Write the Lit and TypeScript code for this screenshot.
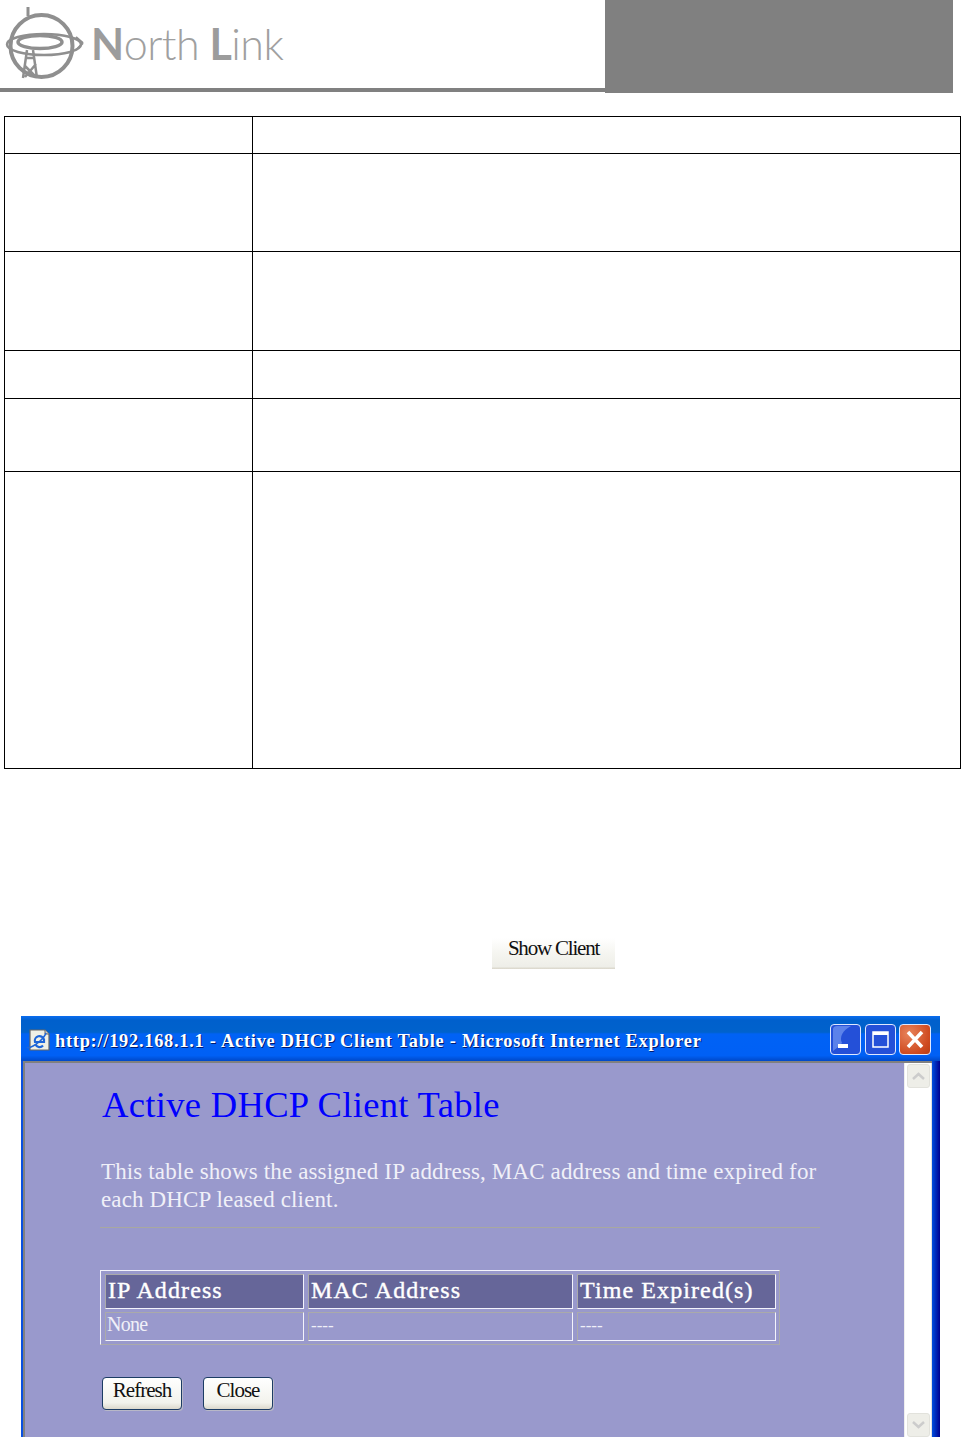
import { LitElement, html, css } from "lit";
import { customElement } from "lit/decorators.js";

@customElement("app-root")
export class AppRoot extends LitElement {
  static styles = css`
    :host { display: block; width: 961px; height: 1437px; overflow: hidden; background: #fff; font-family: "Liberation Serif", serif; position: relative; }
    .header { display: flex; height: 93px; width: 953px; }
    .brand { width: 605px; height: 92px; box-sizing: border-box; border-bottom: 4px solid #808080; display: flex; align-items: flex-start; padding: 7px 0 0 5px; gap: 4px; }
    .brand svg { flex: none; }
    .word { font-family: "Lato", sans-serif; font-weight: 300; font-size: 43px; line-height: 1; color: #a0a0a0; margin-top: 15px; letter-spacing: -0.5px; word-spacing: -1px; }
    .word b { font-weight: 700; color: #9c9c9c; }
    .block { flex: 1; background: #808080; }
    table.doc { border-collapse: collapse; margin: 23px 0 0 4px; width: 957px; table-layout: fixed; }
    table.doc td { border: 1px solid #000; padding: 0; }
    table.doc td:first-child { width: 247px; }
    .showrow { height: 31px; margin: 169px 0 0 492px; width: 123px; box-sizing: border-box; background: linear-gradient(#fff 0%, #f5f5f0 50%, #eeeee8 92%, #d8d4c8 100%); font-size: 21px; letter-spacing: -1.2px; text-align: center; line-height: 21px; color: #111; }
    .win { margin: 47px 0 0 21px; width: 919px; height: 440px; background: linear-gradient(90deg, #0a50e0 0, #0a50e0 99.1%, #0048d8 99.2%, #000090 100%); box-sizing: border-box; display: flex; flex-direction: column; border-radius: 3px 3px 0 0; }
    .title { height: 45px; flex: none; box-sizing: border-box; background: linear-gradient(#0a6cf0 0, #0060cc 10%, #0062cc 36%, #0062f5 40%, #0060f5 88%, #0048c8 100%); display: flex; align-items: center; padding: 2px 9px 0 4px; }
    .ie { flex: none; margin-right: 4px; }
    .ttext { flex: 1; color: #fff; font-weight: 700; font-size: 18.4px; letter-spacing: 0.73px; text-shadow: 1px 1px 0 #001a70; white-space: nowrap; overflow: hidden; margin-top: 4px; }
    .tbtns { display: flex; gap: 3px; }
    .tbtn { width: 31px; height: 31px; box-sizing: border-box; border: 1px solid #dfe8ff; border-radius: 4px; background: #2450d8; overflow: hidden; }
    .tbtn.min { margin-right: 1px; }
    .tbtn svg { display: block; }
    .tbtn.x { width: 32px; background: radial-gradient(circle at 30% 30%, #e8845c, #cf4a20 70%, #b83c14); }
    .frame { flex: 1; display: flex; margin: 0 8px 0 2px; border-top: 2px solid #808080; border-left: 2px solid #808080; min-height: 0; }
    .content { flex: 1; background: #9999cc; padding: 20px 0 0 75px; color: #eeeef8; box-sizing: border-box; min-width: 0; }
    h1 { margin: 0; font-weight: 400; font-size: 36.6px; line-height: 44px; color: #0000ff; letter-spacing: 0.3px; padding-left: 2px; white-space: nowrap; }
    p { margin: 31px 0 0; font-size: 23px; line-height: 28px; width: 730px; letter-spacing: 0.14px; color: #f0f0f8; padding-left: 1px; box-sizing: border-box; }
    hr { margin: 13px 0 0; width: 720px; height: 1px; border: 0; background: #a8a8a0; }
    .tbl { margin-top: 42px; width: 680px; box-sizing: border-box; padding: 3px 3px 3px 4px; border: 1px solid; border-color: #f4f4fc #aaa #aaa #f4f4fc; display: grid; grid-template-columns: 199px 265px 199px; grid-template-rows: 35px 29px; gap: 3px 4px; }
    .c { box-sizing: border-box; border: 1px solid; border-color: #aaa #f4f4fc #f4f4fc #aaa; font-size: 22px; color: #f0f0f8; padding-left: 2px; white-space: nowrap; line-height: 26px; }
    .c.d { font-size: 17px; line-height: 25px; }
    .c.h { background: #666699; font-size: 24px; letter-spacing: 1.1px; line-height: 31px; color: #fff; font-weight: 400; -webkit-text-stroke: 0.4px #fff; }
    .c.n { font-size: 20px; letter-spacing: -0.7px; line-height: 23px; padding-left: 1px; }
    .btns { display: flex; gap: 21px; margin: 32px 0 0 2px; }
    button { height: 33px; box-sizing: border-box; border: 1px solid #1c3c64; border-radius: 4px; background: linear-gradient(#fff, #f2f2ec 80%, #dcd8cc); font: 400 21px "Liberation Serif", serif; letter-spacing: -1px; color: #111; padding: 0 0 9px; box-shadow: 1px 1px 0 #b8b8c8; }
    .b1 { width: 80px; } .b2 { width: 70px; }
    .sb { width: 28px; flex: none; background: #fff; border-right: 1px solid #e0e0e0; box-sizing: border-box; display: flex; flex-direction: column; justify-content: space-between; align-items: center; padding: 1px 0 0; border-left: 1px solid #eee; height: 374px; }
    .sbb { width: 23px; height: 24px; background: #eeeee8; border: 1px solid #e2e2dc; border-radius: 3px; box-sizing: border-box; }
    .sbb svg { display: block; }
  `;

  render() {
    const rows = [37, 98, 99, 48, 73, 297];
    return html`
      <div class="header">
        <div class="brand">
          <svg width="82" height="74" viewBox="0 0 82 74" fill="none" stroke="#8f8f8f">
            <circle cx="36.500" cy="39" r="31" stroke-width="4"></circle>
            <path d="M23 0v9" stroke-width="3"></path>
            <ellipse cx="39" cy="37.500" rx="37" ry="10.500" stroke-width="2.500"></ellipse>
            <ellipse cx="35" cy="35" rx="22" ry="6.500" stroke-width="3.500"></ellipse>
            <path d="M78 36l-7-6M78 36l-7 7" stroke-width="2"></path>
            <path d="M18 71l4-28M32 71l-4-28M20 59l11 11M31 57l-11 13M22 51h7" stroke-width="2.500"></path>
          </svg>
          <div class="word"><b>N</b>orth <b>L</b>ink</div>
        </div>
        <div class="block"></div>
      </div>
      <table class="doc">
        <tbody>
          ${rows.map((h) => html`<tr style="height:${h}px"><td></td><td></td></tr>`)}
        </tbody>
      </table>
      <div class="showrow">Show Client</div>
      <div class="win">
        <div class="title">
          <svg class="ie" width="26" height="24" viewBox="0 0 26 24">
            <path d="M5 2h15l4 4v16H5z" fill="#f0f0e6" stroke="#666" stroke-width="1.200"></path>
            <path d="M20 2v4h4" fill="#ccc" stroke="#666"></path>
            <path d="M19 14h-9a4.500 4.500 0 0 1 9-2.500zM10.500 16.500a4.500 4.500 0 0 0 7.500 1" fill="none" stroke="#1f66d8" stroke-width="2.200"></path>
            <path d="M2 19c2 3 16-6 19-14" fill="none" stroke="#1f66d8" stroke-width="1.600"></path>
          </svg>
          <div class="ttext">http://192.168.1.1 - Active DHCP Client Table - Microsoft Internet Explorer</div>
          <div class="tbtns">
            <div class="tbtn min"><svg width="29" height="29" viewBox="0 0 29 29"><path d="M2 4C2 2 4 1 6 1h14C12 5 8 12 11 18c-3 3-6 6-9 8z" fill="#5c82ea"></path><path d="M7 19h10v4H7z" fill="#fff"></path></svg></div>
            <div class="tbtn"><svg width="29" height="29" viewBox="0 0 29 29"><path d="M7 7h15v15H7z" fill="none" stroke="#fff" stroke-width="1.500"></path><path d="M7 7h15v3H7z" fill="#fff"></path></svg></div>
            <div class="tbtn x"><svg width="30" height="29" viewBox="0 0 30 29"><path d="M8 7l14 15M22 7L8 22" stroke="#fff" stroke-width="3.500"></path></svg></div>
          </div>
        </div>
        <div class="frame">
          <div class="content">
            <h1>Active DHCP Client Table</h1>
            <p>This table shows the assigned IP address, MAC address and time expired for each DHCP leased client.</p>
            <hr />
            <div class="tbl">
              <div class="c h">IP Address</div>
              <div class="c h">MAC Address</div>
              <div class="c h">Time Expired(s)</div>
              <div class="c n">None</div>
              <div class="c d">----</div>
              <div class="c d">----</div>
            </div>
            <div class="btns">
              <button class="b1">Refresh</button>
              <button class="b2">Close</button>
            </div>
          </div>
          <div class="sb">
            <div class="sbb"><svg width="21" height="22" viewBox="0 0 21 22"><path d="M5 14l5.500-5 5.500 5" fill="none" stroke="#ccc" stroke-width="2.500"></path></svg></div>
            <div class="sbb"><svg width="21" height="22" viewBox="0 0 21 22"><path d="M5 8l5.500 5 5.500-5" fill="none" stroke="#ccc" stroke-width="2.500"></path></svg></div>
          </div>
        </div>
      </div>
    `;
  }
}
